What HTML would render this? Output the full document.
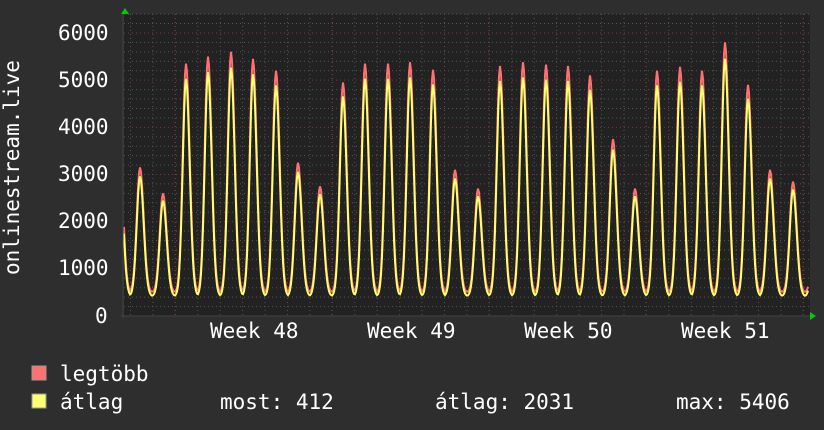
<!DOCTYPE html>
<html><head><meta charset="utf-8"><style>
body{margin:0;background:#2e2e2e;width:824px;height:430px;overflow:hidden;font-family:"DejaVu Sans Mono","Liberation Mono",monospace;color:#fff}
.t{position:absolute;font-size:21px;line-height:21px;white-space:pre}
</style></head><body>
<svg width="824" height="430" style="position:absolute;left:0;top:0">
<rect x="124" y="14" width="686" height="302" fill="#222"/>
<g id="grid"></g>
<path id="mx" fill="none" stroke="#ff7070" stroke-width="2"/>
<path id="av" fill="none" stroke="#ffff70" stroke-width="2"/>
<line x1="123" y1="12" x2="123" y2="318" stroke="#444"/>
<line x1="121" y1="316" x2="812" y2="316" stroke="#444"/>
<polygon points="121,14 125,8 129,14" fill="#0c0"/>
<polygon points="810,312 816,316 810,320" fill="#0c0"/>
<rect x="32" y="366" width="14" height="14" fill="#ff7070" stroke="#999"/>
<rect x="32" y="394" width="14" height="14" fill="#ffff70" stroke="#999"/>
</svg>
<div class="t" style="left:58px;top:23px">6000</div>
<div class="t" style="left:58px;top:70px">5000</div>
<div class="t" style="left:58px;top:117px">4000</div>
<div class="t" style="left:58px;top:164px">3000</div>
<div class="t" style="left:58px;top:211px">2000</div>
<div class="t" style="left:58px;top:258px">1000</div>
<div class="t" style="left:95px;top:306px">0</div>
<div class="t" style="left:2px;top:275px;transform:rotate(-90deg);transform-origin:0 0">onlinestream.live</div>
<div class="t" style="left:210px;top:321px">Week 48</div>
<div class="t" style="left:367px;top:321px">Week 49</div>
<div class="t" style="left:524px;top:321px">Week 50</div>
<div class="t" style="left:681px;top:321px">Week 51</div>
<div class="t" style="left:60px;top:364px">legtöbb</div>
<div class="t" style="left:60px;top:392px">átlag</div>
<div class="t" style="left:220px;top:392px">most: 412</div>
<div class="t" style="left:435px;top:392px">átlag: 2031</div>
<div class="t" style="left:676px;top:392px">max: 5406</div>
<script>
var g='';
for(var v=200;v<=6400;v+=200){var y=316-v*0.04717;if(y<14)break;
var maj=v%1000==0;g+='<line x1="124" x2="810" y1="'+y+'" y2="'+y+'" stroke="'+(maj?'#7a3a3a':'#555')+'" stroke-dasharray="1,3"/>';}
for(var x=130.5;x<810;x+=22.43){g+='<line y1="14" y2="316" x1="'+x+'" x2="'+x+'" stroke="#555" stroke-dasharray="1,3"/>';}
[175,332,489,646,803].forEach(function(x){g+='<line y1="14" y2="316" x1="'+x+'" x2="'+x+'" stroke="#7a3a3a" stroke-dasharray="1,3"/>';});
document.getElementById('grid').innerHTML=g;
var pk=[[119,4000],[140,3150],[163,2600],[186,5350],[208,5500],[231,5600],[253,5450],[276,5200],[298,3250],[320,2750],[343,4950],[365,5350],[388,5350],[410,5380],[433,5220],[455,3100],[478,2700],[500,5300],[523,5380],[546,5330],[568,5300],[590,5100],[613,3750],[635,2700],[657,5200],[680,5280],[702,5200],[725,5800],[748,4900],[770,3100],[793,2850],[816,3000]];
function val(x,f,mn){var best=0;for(var i=0;i<pk.length;i++){var d=(x-pk[i][0]);var w=d<0?4.6:5.2;d/=w;var e=Math.exp(-d*d);var p=pk[i][1]*f;best=Math.max(best,e*(p-mn));}return mn+best;}
function path(f,mn){var s='';for(var x=124;x<=808;x+=1){var y=316-val(x,f,mn)*0.04717;s+=(x==124?'M':'L')+x+','+y.toFixed(1);}return s;}
document.getElementById('mx').setAttribute('d',path(1,500));
document.getElementById('av').setAttribute('d',path(0.94,420));
</script>
</body></html>
